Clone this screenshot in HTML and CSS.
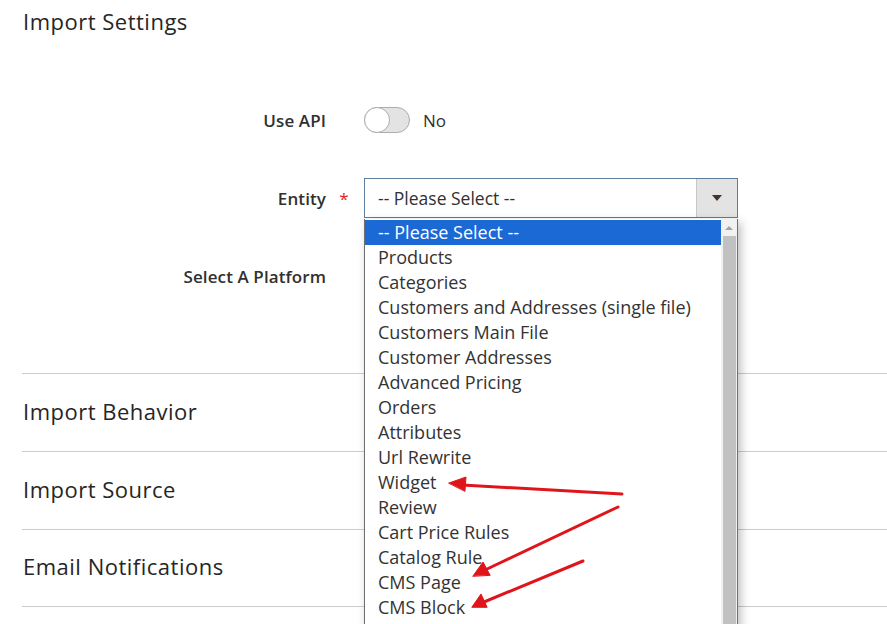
FILE: index.html
```html
<!DOCTYPE html>
<html lang="en">

<head>
    <meta charset="utf8">
    <title>Import Settings</title>
    <link rel="stylesheet" href="styles.css">
</head>

<body>
    <div class="page">
        <h1 class="title">Import Settings</h1>

        <div class="fields">
            <div class="field">
                <label class="label">Use API</label>
                <span class="req"></span>
                <div class="control">
                    <span class="toggle"><span class="knob"></span></span>
                    <span class="toggle-text">No</span>
                </div>
            </div>

            <div class="field">
                <label class="label">Entity</label>
                <span class="req">*</span>
                <div class="control">
                    <div class="select-wrap">
                        <div class="select">
                            <span class="select-value">-- Please Select --</span>
                            <span class="select-btn"><span class="caret"></span></span>
                        </div>

                        <div class="dropdown">
                            <ul class="options">
                                <li class="selected">-- Please Select --</li>
                                <li>Products</li>
                                <li>Categories</li>
                                <li>Customers and Addresses (single file)</li>
                                <li>Customers Main File</li>
                                <li>Customer Addresses</li>
                                <li>Advanced Pricing</li>
                                <li>Orders</li>
                                <li>Attributes</li>
                                <li>Url Rewrite</li>
                                <li>Widget</li>
                                <li>Review</li>
                                <li>Cart Price Rules</li>
                                <li>Catalog Rule</li>
                                <li>CMS Page</li>
                                <li>CMS Block</li>
                            </ul>
                            <div class="scrollbar">
                                <div class="scroll-up"></div>
                                <div class="scroll-thumb"></div>
                            </div>
                        </div>
                    </div>
                </div>
            </div>

            <div class="field">
                <label class="label">Select A Platform</label>
                <span class="req"></span>
                <div class="control"></div>
            </div>
        </div>

        <div class="sections">
            <div class="section"><h2>Import Behavior</h2></div>
            <div class="section"><h2>Import Source</h2></div>
            <div class="section"><h2>Email Notifications</h2></div>
        </div>
    </div>

    <svg class="arrows" width="887" height="624" viewBox="0 0 887 624">
        <g stroke="#e0151b" stroke-width="3" stroke-linecap="round" fill="#e0151b">
            <line x1="622" y1="494" x2="462" y2="485" />
            <polygon points="449,483 466,477 465,491" stroke-width="1" />
            <line x1="618" y1="507" x2="485" y2="570" />
            <polygon points="473,576 483,562 490,575" stroke-width="1" />
            <line x1="583" y1="561" x2="484" y2="602" />
            <polygon points="472,607 481,594 487,607" stroke-width="1" />
        </g>
    </svg>
</body>

</html>
```

FILE: styles.css
```css
* {
    box-sizing: border-box;
}

html,
body {
    margin: 0;
    height: 100%;
    overflow: hidden;
}

body {
    font-family: "Open Sans", "Liberation Sans", sans-serif;
    color: #303030;
    background: #fff;
    position: relative;
}

.page {
    padding: 0 0 0 22px;
}

.title {
    font-size: 22px;
    font-weight: 400;
    line-height: 26px;
    margin: 8px 0 0 1px;
    letter-spacing: .5px;
    color: #262626;
}

.fields {
    display: flex;
    flex-direction: column;
    row-gap: 38px;
    margin-top: 66px;
}

.field {
    display: grid;
    grid-template-columns: 304px 38px 1fr;
    align-items: center;
    height: 40px;
}

.label {
    text-align: right;
    font-size: 17px;
    font-weight: 600;
    letter-spacing: .1px;
}

.req {
    color: #e22626;
    font-size: 17px;
    text-align: center;
    padding-right: 2px;
}

.control {
    display: flex;
    align-items: center;
    height: 100%;
}

.toggle {
    width: 46px;
    height: 26px;
    border: 1px solid #adadad;
    border-radius: 13px;
    background: #e3e3e3;
    position: relative;
}

.toggle .knob {
    position: absolute;
    left: -1px;
    top: -1px;
    width: 26px;
    height: 26px;
    border-radius: 50%;
    background: #fff;
    border: 1px solid #adadad;
}

.toggle-text {
    margin-left: 13px;
    font-size: 17px;
}

.select-wrap {
    position: relative;
    width: 374px;
    height: 40px;
}

.select {
    display: flex;
    height: 40px;
    border: 1px solid #5e7e9e;
    background: #fff;
}

.select-value {
    flex: 1;
    font-size: 17.5px;
    line-height: 38px;
    padding-left: 13px;
}

.select-btn {
    width: 41px;
    background: #e3e3e3;
    border-left: 1px solid #c8c8c8;
    display: flex;
    align-items: center;
    justify-content: center;
}

.caret {
    width: 0;
    height: 0;
    border-left: 5px solid transparent;
    border-right: 5px solid transparent;
    border-top: 6px solid #41362f;
}

.dropdown {
    position: absolute;
    top: 41px;
    left: 0;
    width: 374px;
    height: 440px;
    display: flex;
    background: #fff;
    border: 1px solid #6f6f6f;
    border-top: 0;
    box-shadow: 3px 3px 9px rgba(0, 0, 0, .25);
    z-index: 2;
}

.options {
    flex: 1;
    list-style: none;
    margin: 0;
    padding: 1px 0 0;
}

.options li {
    height: 25px;
    line-height: 25px;
    font-size: 18px;
    padding-left: 13px;
    white-space: nowrap;
    color: #333;
}

.options li.selected {
    background: #1b69d5;
    color: #fff;
}

.scrollbar {
    width: 16px;
    background: #f1f1f1;
    display: flex;
    flex-direction: column;
    align-items: center;
}

.scroll-up {
    height: 17px;
    width: 100%;
    display: flex;
    justify-content: center;
    align-items: center;
}

.scroll-up:before {
    content: "";
    border-left: 4px solid transparent;
    border-right: 4px solid transparent;
    border-bottom: 4px solid #a3a3a3;
}

.scroll-thumb {
    width: 13px;
    flex: 1;
    background: #c1c1c1;
}

.sections {
    margin-top: 77px;
}

.section {
    height: 78px;
    border-top: 1px solid #cccccc;
    display: flex;
    align-items: center;
    padding-bottom: 4px;
}

.section:last-child {
    border-bottom: 1px solid #cccccc;
}

.section h2 {
    margin: 0 0 0 1px;
    font-size: 22px;
    font-weight: 400;
    letter-spacing: .5px;
    color: #262626;
}

.arrows {
    position: absolute;
    left: 0;
    top: 0;
    pointer-events: none;
    z-index: 3;
}
```
